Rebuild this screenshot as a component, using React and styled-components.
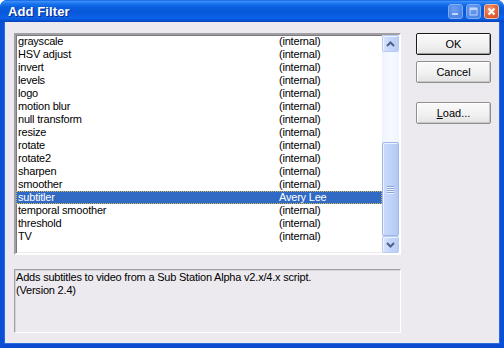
import React from "react";
import styled, { createGlobalStyle } from "styled-components";

const Global = createGlobalStyle`
  html, body { margin: 0; padding: 0; overflow: hidden; background: #fff; }
  * { box-sizing: border-box; }
`;

const Window = styled.div`
  width: 504px;
  height: 348px;
  display: flex;
  flex-direction: column;
  background: #0a4fd8;
  border-radius: 7px 7px 0 0;
  overflow: hidden;
  font-family: "Liberation Sans", Arial, sans-serif;
`;

const TitleBar = styled.div`
  height: 22px;
  flex: none;
  display: flex;
  align-items: center;
  padding: 0 5px 0 8px;
  background: linear-gradient(
    to bottom,
    #0a5fe6 0%,
    #3d8ff5 6%,
    #2a80f4 12%,
    #1570ec 20%,
    #0a60df 32%,
    #0858da 55%,
    #0a5ee4 72%,
    #0b62e8 82%,
    #0853d6 92%,
    #0641b4 100%
  );
`;

const Title = styled.div`
  flex: 1;
  color: #fff;
  font-weight: bold;
  font-size: 13px;
  letter-spacing: 0.1px;
  text-shadow: 1px 1px 0 #0a2a8a;
`;

const Controls = styled.div`
  display: flex;
  gap: 3px;
`;

const CtrlButton = styled.div`
  width: 15px;
  height: 15px;
  border-radius: 3px;
  border: 1px solid ${(p) => (p.$close ? "#f2c0a8" : "#a9c6f5")};
  background: ${(p) =>
    p.$close
      ? "radial-gradient(circle at 40% 35%, #f4a07a 0%, #e2643a 55%, #cc4a1e 100%)"
      : "radial-gradient(circle at 40% 35%, #8fb6f6 0%, #6a9aec 55%, #5a8ae2 100%)"};
  display: flex;
  align-items: center;
  justify-content: center;
  opacity: ${(p) => (p.$close ? 1 : 0.75)};
`;

const Frame = styled.div`
  flex: 1;
  display: flex;
  border-left: 4px solid #0a4fd8;
  border-right: 4px solid #0a4fd8;
  border-bottom: 4px solid #0a4ad0;
  background: #eceaef;
  box-shadow: inset 1px 0 0 #2a6ae0, inset -1px 0 0 #2a6ae0, inset 0 -1px 0 #2a6ae0;
`;

const Body = styled.div`
  flex: 1;
  display: grid;
  grid-template-columns: 387px 75px;
  column-gap: 15px;
  padding: 11px 9px 11px 10px;
`;

const LeftCol = styled.div`
  display: flex;
  flex-direction: column;
  gap: 14px;
`;

const ListBox = styled.div`
  height: 222px;
  background: #fff;
  display: flex;
  border-style: solid;
  border-width: 2px;
  border-color: #a0a0a4 #ffffff #ffffff #a0a0a4;
  box-shadow: inset 1px 1px 0 #7a7a7e, inset -1px -1px 0 #ececee;
`;

const Rows = styled.div`
  flex: 1;
`;

const Row = styled.div`
  height: 13px;
  display: grid;
  grid-template-columns: 261px 1fr;
  align-items: center;
  font-size: 11px;
  letter-spacing: -0.2px;
  line-height: 13px;
  padding-left: 2px;
  color: ${(p) => (p.$selected ? "#fff" : "#000")};
  background: ${(p) => (p.$selected ? "#316ac5" : "transparent")};
  outline: ${(p) => (p.$selected ? "1px dotted #d8b84a" : "none")};
  outline-offset: -1px;
  white-space: nowrap;
`;

const ScrollBar = styled.div`
  width: 17px;
  flex: none;
  display: flex;
  flex-direction: column;
  background: linear-gradient(to right, #eef3fd 0%, #f6f9ff 50%, #eef3fd 100%);
`;

const ScrollButton = styled.div`
  height: 17px;
  flex: none;
  border: 1px solid #b7caf2;
  border-radius: 2px;
  background: linear-gradient(to right, #d6e3fc 0%, #c4d6fa 50%, #b8ccf6 100%);
  box-shadow: inset 1px 1px 0 #eef4ff;
  display: flex;
  align-items: center;
  justify-content: center;
`;

const TrackSpace = styled.div`
  height: 90px;
  flex: none;
`;

const Thumb = styled.div`
  height: 94px;
  flex: none;
  border: 1px solid #9eb6e8;
  border-radius: 2px;
  background: linear-gradient(to right, #cbdaf9 0%, #c2d4f9 40%, #b3c9f5 100%);
  box-shadow: inset 1px 1px 0 #eaf1ff;
  display: flex;
  flex-direction: column;
  align-items: center;
  justify-content: center;
  gap: 1px;
`;

const Grip = styled.div`
  width: 7px;
  height: 1px;
  background: #8aa4d6;
  box-shadow: 0 1px 0 #eef3ff;
`;

const DescBox = styled.div`
  height: 64px;
  background: #eceaef;
  border-style: solid;
  border-width: 1px;
  border-color: #a0a0a4 #ffffff #ffffff #a0a0a4;
  box-shadow: inset 1px 1px 0 #d4d3d8;
  font-size: 11px;
  letter-spacing: -0.2px;
  line-height: 13px;
  color: #000;
  padding: 1px 1px 0 1px;
  white-space: nowrap;
`;

const RightCol = styled.div`
  display: flex;
  flex-direction: column;
`;

const Button = styled.div`
  height: 22px;
  width: 75px;
  flex: none;
  margin-top: ${(p) => p.$mt || 0}px;
  display: flex;
  align-items: center;
  justify-content: center;
  font-size: 11px;
  color: #000;
  border-radius: 2px;
  border: 1px solid ${(p) => (p.$default ? "#1a1a1a" : "#8e8f8f")};
  background: linear-gradient(to bottom, #fafafa 0%, #f0f0f0 60%, #e2e2e2 100%);
  box-shadow: ${(p) =>
    p.$default
      ? "inset 1px 1px 0 #fff, inset -1px -1px 0 #9a9a9a"
      : "inset 1px 1px 0 #fff, inset -1px -1px 0 #c8c8c8"};
`;

const U = styled.span`
  text-decoration: underline;
`;

const filters = [
  ["grayscale", "(internal)"],
  ["HSV adjust", "(internal)"],
  ["invert", "(internal)"],
  ["levels", "(internal)"],
  ["logo", "(internal)"],
  ["motion blur", "(internal)"],
  ["null transform", "(internal)"],
  ["resize", "(internal)"],
  ["rotate", "(internal)"],
  ["rotate2", "(internal)"],
  ["sharpen", "(internal)"],
  ["smoother", "(internal)"],
  ["subtitler", "Avery Lee"],
  ["temporal smoother", "(internal)"],
  ["threshold", "(internal)"],
  ["TV", "(internal)"],
];

const Chevron = ({ up }) => (
  <svg width="9" height="6" viewBox="0 0 9 6">
    <path
      d={up ? "M1 5 L4.5 1.5 L8 5" : "M1 1 L4.5 4.5 L8 1"}
      fill="none"
      stroke="#4d6185"
      strokeWidth="2"
    />
  </svg>
);

export default function App() {
  return (
    <>
      <Global />
      <Window>
        <TitleBar>
          <Title>Add Filter</Title>
          <Controls>
            <CtrlButton>
              <svg width="9" height="9" viewBox="0 0 9 9">
                <rect x="1" y="6" width="6" height="2" fill="#fff" />
              </svg>
            </CtrlButton>
            <CtrlButton>
              <svg width="9" height="9" viewBox="0 0 9 9">
                <rect x="1" y="1" width="7" height="7" fill="none" stroke="#fff" strokeWidth="1" />
                <rect x="1" y="1" width="7" height="2" fill="#fff" />
              </svg>
            </CtrlButton>
            <CtrlButton $close>
              <svg width="9" height="9" viewBox="0 0 9 9">
                <path d="M1.5 1.5 L7.5 7.5 M7.5 1.5 L1.5 7.5" stroke="#fff" strokeWidth="2" />
              </svg>
            </CtrlButton>
          </Controls>
        </TitleBar>
        <Frame>
          <Body>
            <LeftCol>
              <ListBox>
                <Rows>
                  {filters.map(([name, author]) => (
                    <Row key={name} $selected={name === "subtitler"}>
                      <span>{name}</span>
                      <span>{author}</span>
                    </Row>
                  ))}
                </Rows>
                <ScrollBar>
                  <ScrollButton>
                    <Chevron up />
                  </ScrollButton>
                  <TrackSpace />
                  <Thumb>
                    <Grip />
                    <Grip />
                    <Grip />
                    <Grip />
                  </Thumb>
                  <ScrollButton>
                    <Chevron />
                  </ScrollButton>
                </ScrollBar>
              </ListBox>
              <DescBox>
                Adds subtitles to video from a Sub Station Alpha v2.x/4.x script.
                <br />
                (Version 2.4)
              </DescBox>
            </LeftCol>
            <RightCol>
              <Button $default>OK</Button>
              <Button $mt={6}>Cancel</Button>
              <Button $mt={19}>
                <span>
                  <U>L</U>oad...
                </span>
              </Button>
            </RightCol>
          </Body>
        </Frame>
      </Window>
    </>
  );
}
